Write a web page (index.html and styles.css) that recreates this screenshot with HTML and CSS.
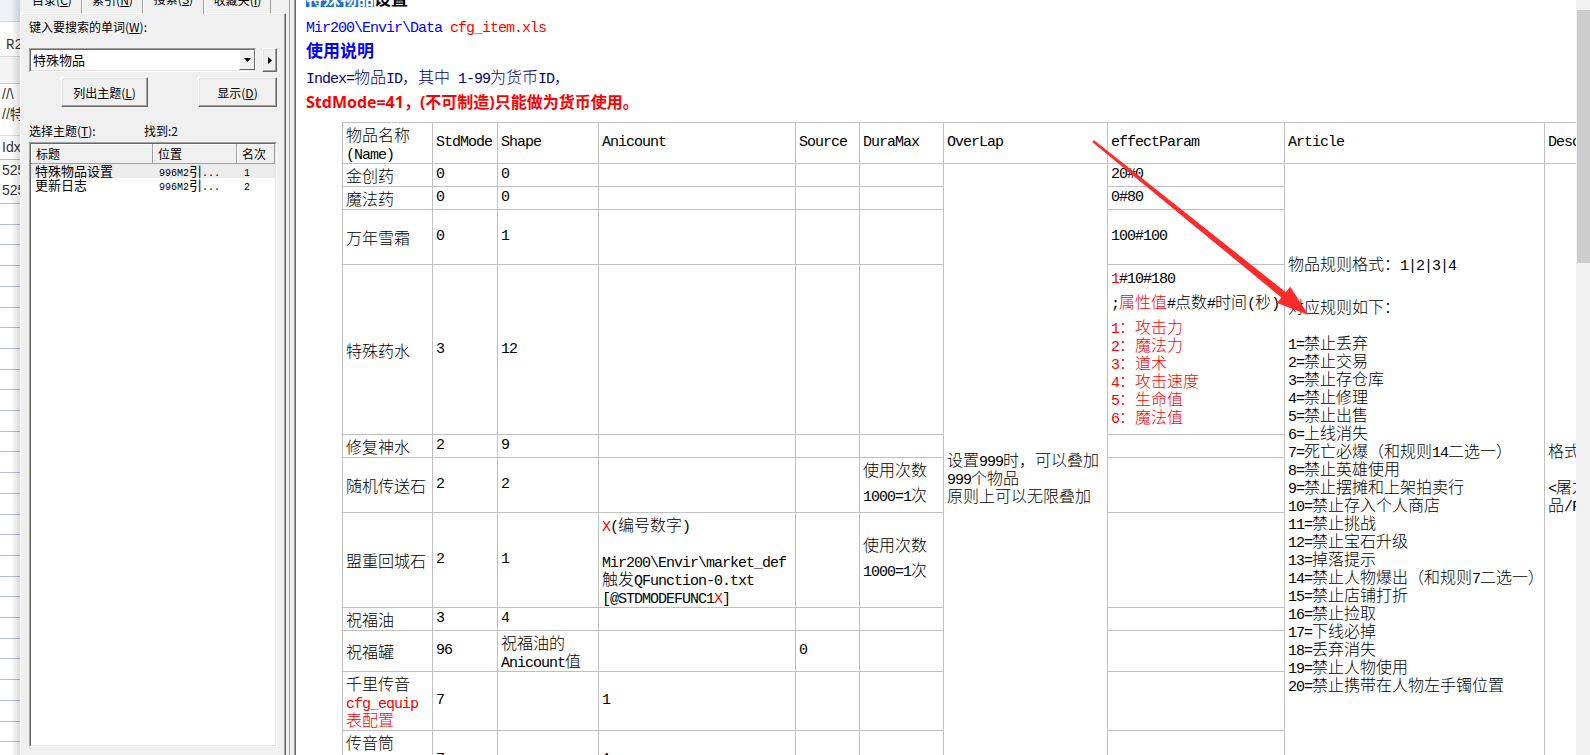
FILE: index.html
```html
<!DOCTYPE html>
<html lang="zh-CN">
<head>
<meta charset="utf-8">
<title>特殊物品设置</title>
<link rel="stylesheet" href="styles.css">
</head>
<body>
<div class="bgwin">
  <div class="bw-top"></div>
  <div class="bw-r">R2</div>
  <div class="bw-gray"></div>
  <div class="bw-row">//\</div>
  <div class="bw-row">//特</div>
  <div class="bw-gap"></div>
  <div class="bw-row bw-hd">Idx</div>
  <div class="bw-row">525</div>
  <div class="bw-row">525</div>
  <div class="bw-lines"></div>
</div>

<div class="pane">
  <div class="tabs">
    <div class="tab t1">目录(<u>C</u>)</div>
    <div class="tab t2">索引(<u>N</u>)</div>
    <div class="tab t3 sel">搜索(<u>S</u>)</div>
    <div class="tab t4">收藏夹(<u>I</u>)</div>
  </div>
  <div class="page">
    <div class="lbl">键入要搜索的单词(<u>W</u>):</div>
    <div class="comborow">
      <div class="combo">
        <span class="combo-text">特殊物品</span>
        <span class="dd"><svg width="7" height="4" viewBox="0 0 7 4"><path d="M0 0h7L3.5 4z" fill="#000"/></svg></span>
      </div>
      <div class="btn arrowbtn"><svg width="4" height="7" viewBox="0 0 4 7"><path d="M0 0v7l4-3.5z" fill="#000"/></svg></div>
    </div>
    <div class="btnrow">
      <div class="btn b1">列出主题(<u>L</u>)</div>
      <div class="btn b2">显示(<u>D</u>)</div>
    </div>
    <div class="lbl2"><span class="sl">选择主题(<u>T</u>):</span><span>找到:2</span></div>
    <div class="list">
      <div class="list-in">
        <div class="lh"><div class="c1">标题</div><div class="c2">位置</div><div class="c3">名次</div></div>
        <div class="lr sel"><div class="c1">特殊物品设置</div><div class="c2"><span class="le">996M2</span>引<span class="le">...</span></div><div class="c3"><span class="le">1</span></div></div>
        <div class="lr"><div class="c1">更新日志</div><div class="c2"><span class="le">996M2</span>引<span class="le">...</span></div><div class="c3"><span class="le">2</span></div></div>
      </div>
    </div>
  </div>
</div>

<div class="split"></div>

<div class="content">
  <div class="title"><span class="hl">特殊物品</span>设置</div>
  <div class="path"><span class="e b">Mir200\Envir\Data </span><span class="e r">cfg_item.xls</span></div>
  <div class="h2">使用说明</div>
  <div class="idx"><span class="e">Index=</span>物品<span class="e">ID</span>，其中<span class="e"> 1-99</span>为货币<span class="e">ID</span>，</div>
  <div class="warn">StdMode=41，(不可制造)只能做为货币使用。</div>

  <table class="grid">
    <colgroup>
      <col class="k1"><col class="k2"><col class="k3"><col class="k4"><col class="k5">
      <col class="k6"><col class="k7"><col class="k8"><col class="k9"><col class="k10">
    </colgroup>
    <tr class="h41">
      <td>物品名称<br><span class="e">(Name)</span></td>
      <td class="m">StdMode</td><td class="m">Shape</td><td class="m">Anicount</td><td class="m">Source</td>
      <td class="m">DuraMax</td><td class="m">OverLap</td><td class="m">effectParam</td><td class="m">Article</td><td class="m">Desc</td>
    </tr>
    <tr class="h23">
      <td>金创药</td><td class="m">0</td><td class="m">0</td><td></td><td></td><td></td>
      <td rowspan="11">设置<span class="e">999</span>时，可以叠加<br><span class="e">999</span>个物品<br>原则上可以无限叠加</td>
      <td class="m">20#0</td>
      <td rowspan="11"><p>物品规则格式：<span class="e">1|2|3|4</span><br><br></p><p>对应规则如下：<br><br><span class="e">1=</span>禁止丢弃<br><span class="e">2=</span>禁止交易<br><span class="e">3=</span>禁止存仓库<br><span class="e">4=</span>禁止修理<br><span class="e">5=</span>禁止出售<br><span class="e">6=</span>上线消失<br><span class="e">7=</span>死亡必爆（和规则<span class="e">14</span>二选一）<br><span class="e">8=</span>禁止英雄使用<br><span class="e">9=</span>禁止摆摊和上架拍卖行<br><span class="e">10=</span>禁止存入个人商店<br><span class="e">11=</span>禁止挑战<br><span class="e">12=</span>禁止宝石升级<br><span class="e">13=</span>掉落提示<br><span class="e">14=</span>禁止人物爆出（和规则<span class="e">7</span>二选一）<br><span class="e">15=</span>禁止店铺打折<br><span class="e">16=</span>禁止捡取<br><span class="e">17=</span>下线必掉<br><span class="e">18=</span>丢弃消失<br><span class="e">19=</span>禁止人物使用<br><span class="e">20=</span>禁止携带在人物左手镯位置</p></td>
      <td rowspan="11">格式：物品名称<br><br><span class="e">&lt;</span>屠龙刀<span class="e">&gt;</span><br>品<span class="e">/F</span></td>
    </tr>
    <tr class="h23">
      <td>魔法药</td><td class="m">0</td><td class="m">0</td><td></td><td></td><td></td><td class="m">0#80</td>
    </tr>
    <tr class="h55">
      <td>万年雪霜</td><td class="m">0</td><td class="m">1</td><td></td><td></td><td></td><td class="m">100#100</td>
    </tr>
    <tr class="h170">
      <td>特殊药水</td><td class="m">3</td><td class="m">12</td><td></td><td></td><td></td>
      <td><p><span class="e"><span class="r">1</span>#10#180</span></p><p><span class="e">;</span><span class="r">属性值</span><span class="e">#</span>点数<span class="e">#</span>时间<span class="e">(</span>秒<span class="e">)</span></p><p class="r"><span class="e">1</span>：攻击力<br><span class="e">2</span>：魔法力<br><span class="e">3</span>：道术<br><span class="e">4</span>：攻击速度<br><span class="e">5</span>：生命值<br><span class="e">6</span>：魔法值</p></td>
    </tr>
    <tr class="h23">
      <td>修复神水</td><td class="m">2</td><td class="m">9</td><td></td><td></td><td></td><td></td>
    </tr>
    <tr class="h55">
      <td>随机传送石</td><td class="m">2</td><td class="m">2</td><td></td><td></td>
      <td><p>使用次数</p><p><span class="e">1000=1</span>次</p></td><td></td>
    </tr>
    <tr class="h95">
      <td>盟重回城石</td><td class="m">2</td><td class="m">1</td>
      <td><span class="e"><span class="r">X</span>(</span>编号数字<span class="e">)</span><br><br><span class="e">Mir200\Envir\market_def</span><br>触发<span class="e">QFunction-0.txt</span><br><span class="e">[@STDMODEFUNC1<span class="r">X</span>]</span></td>
      <td></td>
      <td><p>使用次数</p><p><span class="e">1000=1</span>次</p></td><td></td>
    </tr>
    <tr class="h23">
      <td>祝福油</td><td class="m">3</td><td class="m">4</td><td></td><td></td><td></td><td></td>
    </tr>
    <tr class="h41">
      <td>祝福罐</td><td class="m">96</td><td>祝福油的<br><span class="e">Anicount</span>值</td><td></td><td class="m">0</td><td></td><td></td>
    </tr>
    <tr class="h59">
      <td>千里传音<br><span class="e r">cfg_equip</span><br><span class="r">表配置</span></td><td class="m">7</td><td></td><td class="m">1</td><td></td><td></td><td></td>
    </tr>
    <tr class="h59">
      <td>传音筒<br><span class="e r">cfg_equip</span><br><span class="r">表配置</span></td><td class="m">7</td><td></td><td class="m">1</td><td></td><td></td><td></td>
    </tr>
  </table>
</div>

<div class="vscroll"><div class="thumb"></div></div>

<svg class="anno" width="1590" height="755" viewBox="0 0 1590 755">
  <polygon points="1093.8,140.1 1285.8,292.2 1290.2,286.7 1308.5,315 1277,303.1 1281.4,297.6 1092.2,141.9" fill="#ff2b2b"/>
</svg>
</body>
</html>
```
FILE: styles.css
```css
* { box-sizing: border-box; }
html, body { margin: 0; padding: 0; }
body {
  width: 1590px; height: 755px; overflow: hidden;
  display: flex; position: relative; background: #fff;
  font-family: "Noto Sans CJK SC", sans-serif; color: #000;
}

/* background window strip */
.bgwin {
  flex: 0 0 20px; position: relative; display: flex; flex-direction: column;
  overflow: hidden; background: #fff; color: #333;
  font: 14px/20px "Liberation Sans", "Noto Sans CJK SC", sans-serif; white-space: nowrap;
}
.bgwin::after {
  content: ""; position: absolute; top: 0; right: 0; bottom: 0; width: 9px;
  background: linear-gradient(to right, rgba(0,0,0,0), rgba(0,0,0,.14));
}
.bw-top { flex: 0 0 22px; background: #eef1f5; border-bottom: 1px solid #d4d9e1; }
.bw-r { flex: 0 0 35px; padding: 13px 0 0 6px; font-family: "Liberation Mono", monospace; border-bottom: 1px solid #d6d6d6; }
.bw-gray { flex: 0 0 27px; background: #f4f4f4; border-bottom: 1px solid #b5d9bd; }
.bw-row { flex: 0 0 20px; padding-left: 2px; }
.bw-gap { flex: 0 0 12px; border-bottom: 1px solid #dcdcdc; }
.bw-hd { flex-basis: 24px; line-height: 22px; border-bottom: 1px solid #9fd1a9; }
.bw-lines {
  flex: 1;
  background: repeating-linear-gradient(to bottom, transparent 0, transparent 3px, #b5bdd5 3px, #b5bdd5 4px, transparent 4px, transparent 20.7px);
}

/* help pane */
.pane { flex: 0 0 266px; min-height: 0; display: flex; flex-direction: column; background: #f0f0f0; font-size: 12px; }
.tabs {
  flex: 0 0 13px; height: 13px; min-height: 0;
  display: flex; align-items: flex-end; padding-left: 2px; position: relative; z-index: 1;
}
.tab {
  flex: 0 0 auto; height: 24px; line-height: 20px; text-align: center; white-space: nowrap;
  background: #f0f0f0; border: 1px solid #a0a0a0; border-bottom: 0;
  border-left-color: #fff; border-top-color: #fff;
}
.t1 { width: 60px; } .t2 { width: 61px; } .t3 { width: 61px; } .t4 { width: 67px; }
.tab.sel { height: 26px; margin-bottom: -1px; }
.page {
  flex: 1; min-height: 0; display: flex; flex-direction: column;
  border-top: 1px solid #fff; border-left: 1px solid #fff; border-right: 1px solid #696969;
  box-shadow: inset -1px 0 #a0a0a0;
  padding: 5px 8px 8px 8px;
}
.lbl { line-height: 16px; white-space: nowrap; }
.comborow { display: flex; gap: 6px; margin-top: 13px; height: 24px; flex: none; }
.combo {
  flex: 0 0 227px; display: flex; align-items: stretch; background: #fff;
  border: 1px solid; border-color: #a0a0a0 #fff #fff #a0a0a0;
  box-shadow: inset 1px 1px #696969, inset -1px -1px #e3e3e3;
  padding: 1px 0 1px 3px;
}
.combo-text { flex: 1; font-size: 13px; line-height: 20px; }
.dd {
  flex: 0 0 16px; display: flex; align-items: center; justify-content: center;
  background: #f0f0f0; border: 1px solid; border-color: #fff #696969 #696969 #fff;
}
.btn {
  display: flex; align-items: center; justify-content: center; white-space: nowrap;
  background: #f0f0f0; border: 1px solid; border-color: #fff #696969 #696969 #fff;
  box-shadow: inset -1px -1px #a0a0a0, inset 1px 1px #e3e3e3;
}
.arrowbtn { flex: 0 0 15px; }
.btnrow { display: flex; margin-top: 5px; height: 30px; flex: none; }
.b1 { width: 87px; margin-left: 32px; }
.b2 { width: 79px; margin-left: auto; }
.lbl2 { display: flex; margin-top: 16px; line-height: 16px; white-space: nowrap; }
.lbl2 .sl { width: 115px; }
.list {
  flex: 1; min-height: 0; display: flex; margin-top: 3px;
  border: 1px solid; border-color: #a0a0a0 #fff #fff #a0a0a0;
}
.list-in { flex: 1; background: #fff; border: 1px solid; border-color: #696969 #e3e3e3 #e3e3e3 #696969; }
.lh { display: flex; height: 20px; line-height: 19px; background: #f0f0f0; }
.lh div { border-right: 1px solid #a0a0a0; border-bottom: 1px solid #a0a0a0; box-shadow: inset 1px 1px #fff; padding-left: 5px; }
.c1 { width: 122px; } .c2 { width: 84px; } .c3 { flex: 1; }
.lr { display: flex; height: 14px; font-size: 13px; line-height: 14px; white-space: nowrap; }
.lr.sel { background: #ececec; }
.lr .c1 { padding-left: 4px; } .lr .c2 { padding-left: 6px; } .lr .c3 { padding-left: 7px; }
.le { font: 10px "Liberation Mono", monospace; }

.split {
  flex: 0 0 10px;
  background: linear-gradient(to right, #f0f0f0 0, #f0f0f0 3px, #a0a0a0 3px, #a0a0a0 4px, #f0f0f0 4px, #f0f0f0 8px, #a0a0a0 8px, #a0a0a0 9px, #696969 9px, #696969 10px);
}

/* document */
.content { flex: 1 1 0; min-width: 0; overflow: hidden; position: relative; background: #fff; padding-left: 10px; }
.title { margin-top: -12px; font-size: 17px; font-weight: bold; line-height: 19px; white-space: nowrap; }
.hl { display: inline-block; background: #1c6fd8; color: #fff; line-height: 19px; }
.path { margin-top: 9px; font-size: 16px; line-height: 18px; white-space: nowrap; }
.h2 { margin-top: 5px; font-size: 17px; line-height: 22px; font-weight: bold; color: #0000ff; }
.idx { margin-top: 6px; font-size: 16px; line-height: 18px; color: #000080; white-space: nowrap; font-weight: 300; }
.warn { margin-top: 5px; font: bold 16px/24px "Open Sans", "Noto Sans CJK SC", sans-serif; color: #ff0000; white-space: nowrap; }

.e { font-family: "Liberation Mono", monospace; font-size: 15px; letter-spacing: -1px; line-height: 0; }
.m { font-family: "Liberation Mono", monospace; font-size: 15px; letter-spacing: -1px; }
.r { color: #ff0000; }
.b { color: #0000ff; }

.grid {
  border-collapse: collapse; table-layout: fixed; width: 1402px;
  margin: 8px 0 0 36px;
  font: 300 16px/18px "Noto Sans CJK SC", sans-serif; color: #000;
}
.grid td {
  border: 1px solid #c0c0c0; padding: 2px 3px;
  vertical-align: middle; white-space: nowrap; overflow: hidden;
}
.grid p { margin: 0 0 7px; }
.k1 { width: 90px; } .k2 { width: 65px; } .k3 { width: 101px; } .k4 { width: 197px; } .k5 { width: 64px; }
.k6 { width: 84px; } .k7 { width: 164px; } .k8 { width: 177px; } .k9 { width: 260px; } .k10 { width: 200px; }
.h23 { height: 23px; } .h41 { height: 41px; } .h55 { height: 55px; } .h59 { height: 59px; }
.h95 { height: 95px; } .h170 { height: 170px; }

.vscroll { flex: 0 0 14px; background: #f0f0f0; padding-top: 10px; }
.thumb { height: 253px; margin-left: 1px; background: #cdcdcd; }

.anno { position: absolute; left: 0; top: 0; pointer-events: none; }
```
